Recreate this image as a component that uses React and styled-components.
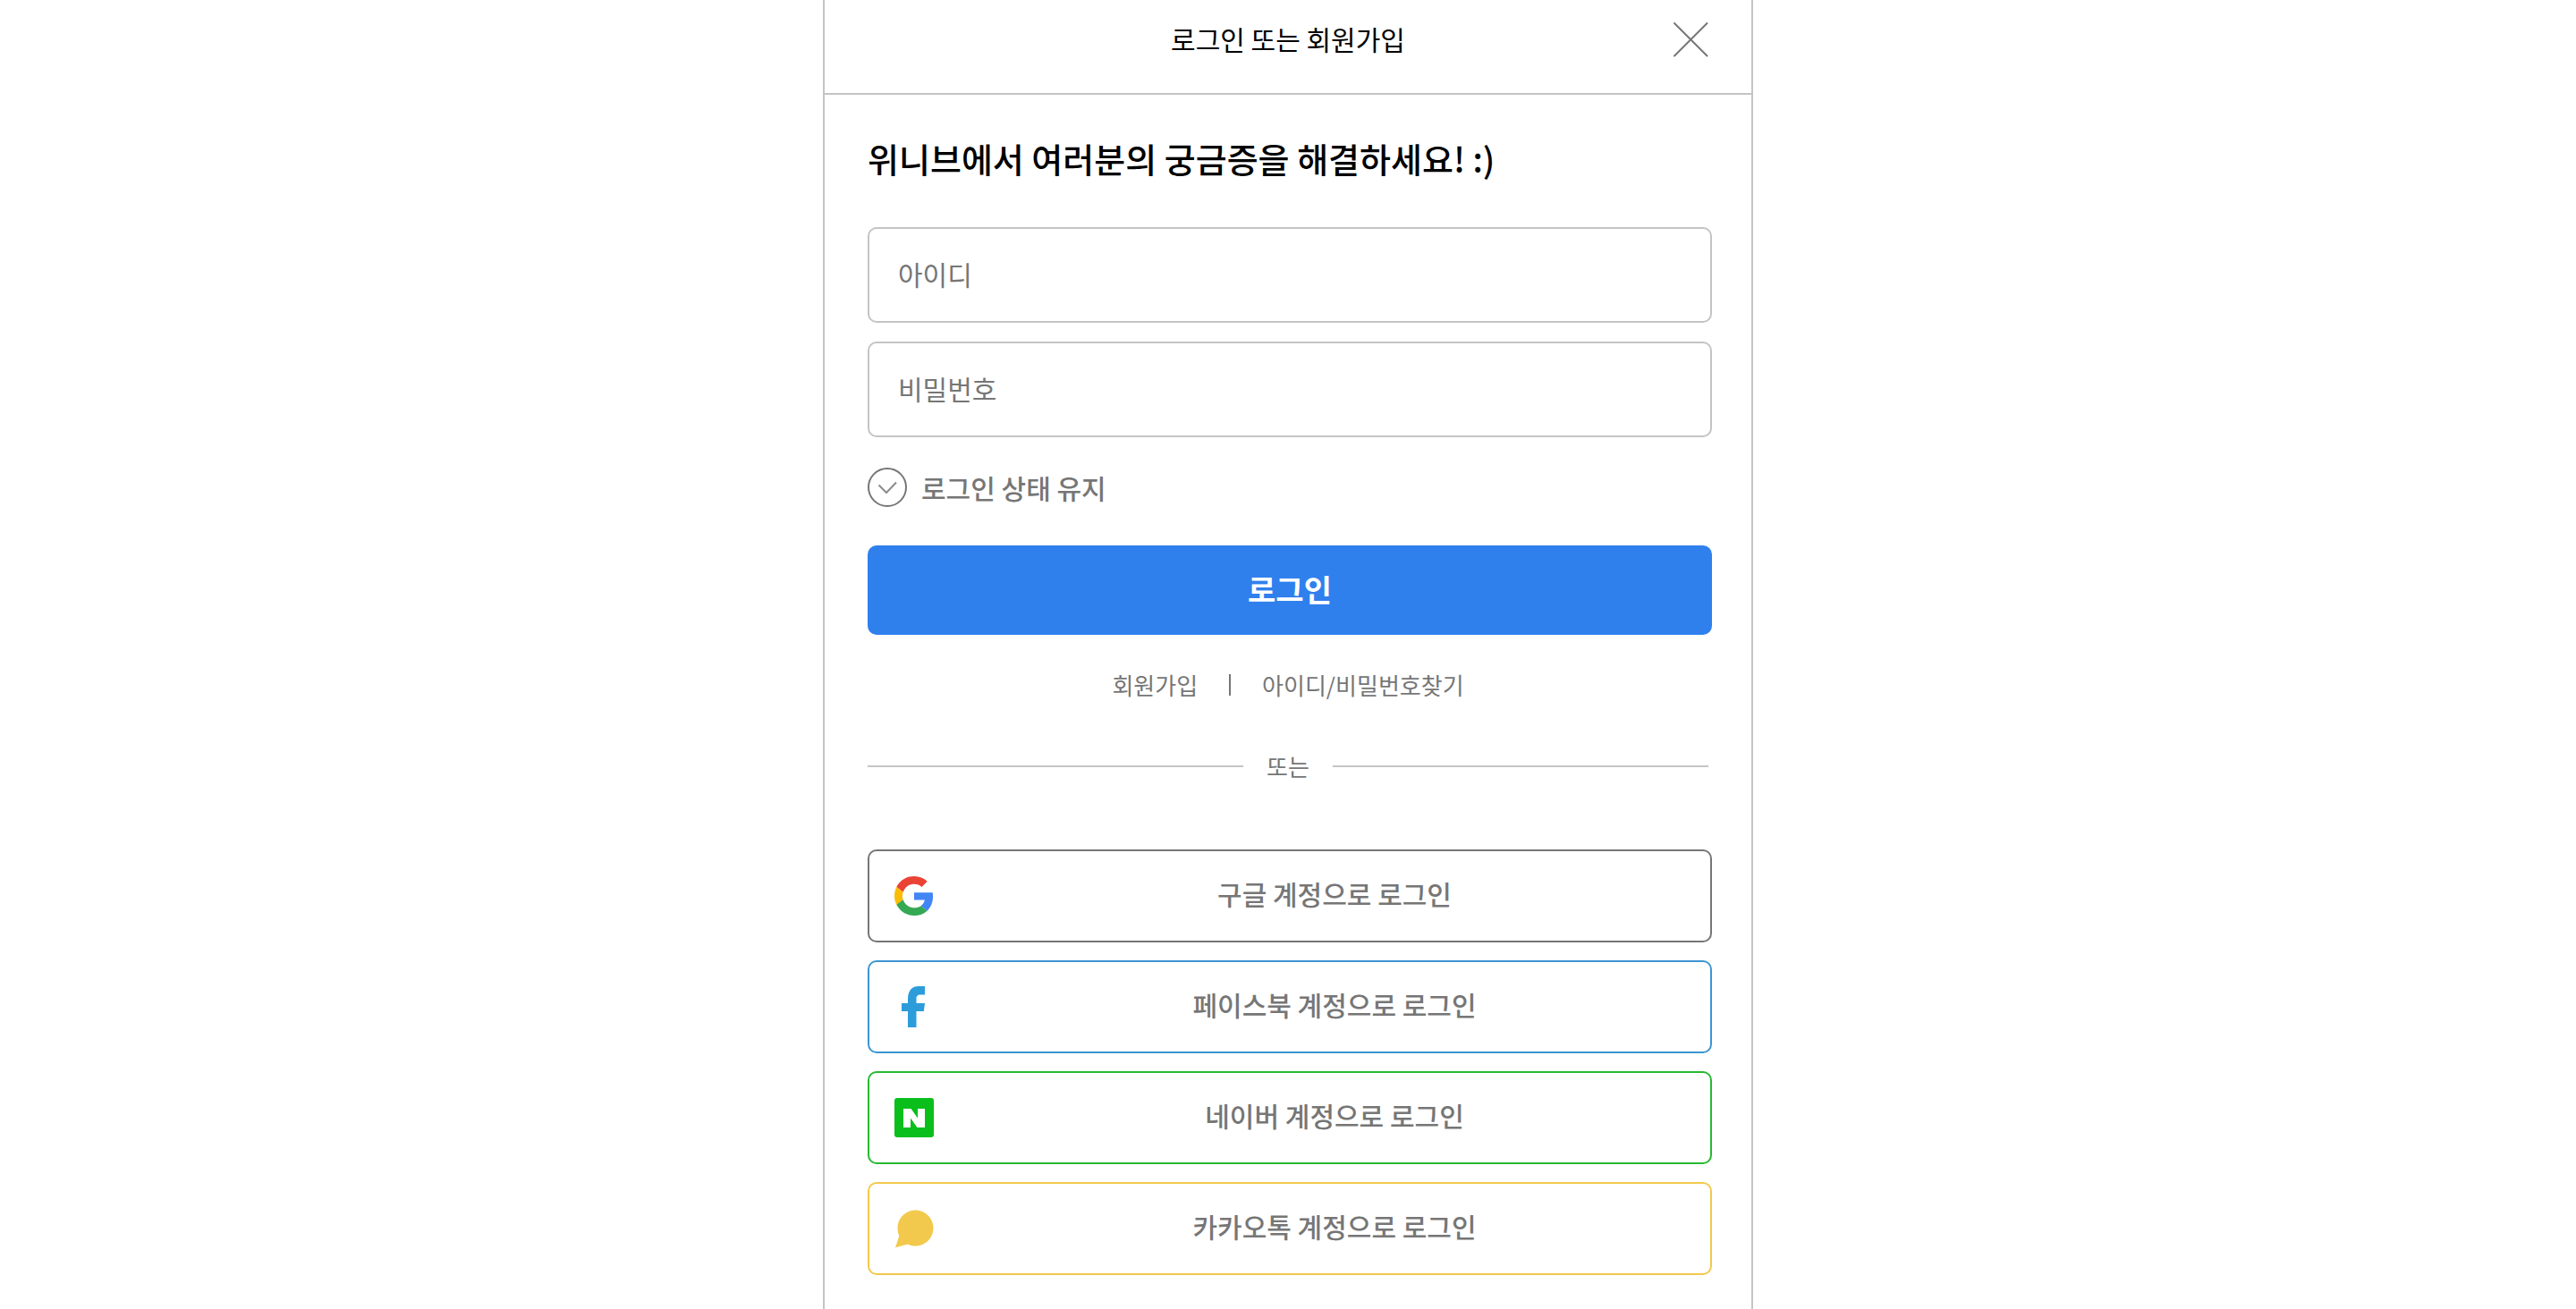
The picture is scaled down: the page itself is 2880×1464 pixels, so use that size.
import React from "react";
import styled, { createGlobalStyle } from "styled-components";

const color = {
  text: "#000000",
  gray: "#767676",
  line: "#c4c4c4",
  primary: "#2f80ed",
  facebook: "#2d9cdb",
  facebookLine: "#3c96d2",
  naver: "#0abf1c",
  naverLine: "#28b932",
  kakao: "#f2c94c",
};

const GlobalStyle = createGlobalStyle`
  *, *::before, *::after { box-sizing: border-box; }
  body {
    margin: 0;
    background: #ffffff;
    color: ${color.text};
    font-family: "Noto Sans CJK KR", "Noto Sans", sans-serif;
    font-size: 30px;
  }
  button, input { font: inherit; }
`;

const Page = styled.main`
  display: flex;
  align-items: center;
  justify-content: center;
  height: 100vh;
  overflow: hidden;
`;

const Card = styled.section`
  flex: none;
  width: 100%;
  max-width: 1040px;
  border: 2px solid ${color.line};
  border-radius: 20px;
  background: #ffffff;
`;

const Header = styled.header`
  display: grid;
  grid-template-columns: 1fr auto 1fr;
  align-items: center;
  height: 122px;
  padding: 0 48px;
  border-bottom: 2px solid ${color.line};
`;

const HeaderTitle = styled.h1`
  grid-column: 2;
  margin: 0;
  padding-bottom: 2px;
  font-size: 30px;
  font-weight: 400;
  line-height: 44px;
`;

const CloseButton = styled.button`
  justify-self: end;
  display: flex;
  padding: 0;
  border: 0;
  background: none;
  color: ${color.gray};
  cursor: pointer;
`;

const Body = styled.div`
  padding: 43px 44px 54px 48px;
`;

const Title = styled.h2`
  margin: 0 0 49px;
  font-size: 38px;
  font-weight: 500;
  line-height: 56px;
`;

const Fields = styled.div`
  display: flex;
  flex-direction: column;
  gap: 21px;
`;

const Field = styled.input`
  width: 100%;
  height: 107px;
  padding: 0 32px 4px;
  border: 2px solid ${color.line};
  border-radius: 10px;
  background: #ffffff;
  color: ${color.text};

  &::placeholder {
    color: ${color.gray};
    opacity: 1;
  }
`;

const KeepLogin = styled.label`
  display: flex;
  align-items: center;
  gap: 16px;
  margin: 34px 0 43px;
  color: ${color.gray};
  font-weight: 500;
  line-height: 44px;
  cursor: pointer;
`;

const CheckBox = styled.span`
  display: grid;

  & > * { grid-area: 1 / 1; }
  & > svg { pointer-events: none; }
`;

const CheckInput = styled.input`
  appearance: none;
  width: 44px;
  height: 44px;
  margin: 0;
  border: 2px solid ${color.gray};
  border-radius: 50%;
  cursor: pointer;
`;

const LoginButton = styled.button`
  display: block;
  width: 100%;
  height: 100px;
  padding: 0 0 4px;
  border: 0;
  border-radius: 10px;
  background: ${color.primary};
  color: #ffffff;
  font-size: 34px;
  font-weight: 700;
  cursor: pointer;
`;

const Links = styled.nav`
  display: flex;
  align-items: center;
  justify-content: center;
  gap: 35px;
  margin: 36px 4px 51px 0;
  font-size: 26px;
  line-height: 40px;
`;

const TextLink = styled.a`
  color: ${color.gray};
  text-decoration: none;
`;

const Bar = styled.span`
  width: 2px;
  height: 24px;
  background: ${color.gray};
`;

const Divider = styled.div`
  display: flex;
  align-items: center;
  gap: 26px;
  margin: 0 4px 73px 0;
  color: ${color.gray};
  font-size: 26px;
  line-height: 40px;

  &::before,
  &::after {
    content: "";
    flex: 1;
    height: 2px;
    background: ${color.line};
  }
`;

const SocialList = styled.div`
  display: flex;
  flex-direction: column;
  gap: 20px;
`;

const SocialButton = styled.button`
  display: flex;
  align-items: center;
  width: 100%;
  height: 104px;
  padding: 0 0 0 28px;
  border: 2px solid ${(props) => props.$color};
  border-radius: 10px;
  background: #ffffff;
  color: ${color.gray};
  font-weight: 500;
  cursor: pointer;

  & > svg { flex: none; margin-right: 28px; }
`;

const SocialLabel = styled.span`
  flex: 1;
  padding-bottom: 6px;
  text-align: center;
`;

const CloseIcon = () => (
  <svg width="40" height="40" viewBox="0 0 40 40" fill="none" stroke="currentColor" strokeWidth="2" strokeLinecap="round" aria-hidden="true">
    <path d="M2 2 38.500 38.500M38.500 2 2 38.500" />
  </svg>
);

const CheckIcon = () => (
  <svg width="44" height="44" viewBox="0 0 44 44" fill="none" stroke="#8c8c8c" strokeWidth="2" aria-hidden="true">
    <path d="M12.5 19.5 21 28 32 16.5" />
  </svg>
);

const GoogleIcon = () => (
  <svg width="44" height="44" viewBox="0 0 48 48" aria-hidden="true">
    <path fill="#EA4335" d="M24 9.5c3.54 0 6.71 1.22 9.21 3.6l6.85-6.85C35.9 2.38 30.47 0 24 0 14.62 0 6.51 5.38 2.56 13.22l7.98 6.19C12.43 13.72 17.74 9.5 24 9.5z" />
    <path fill="#4285F4" d="M46.98 24.55c0-1.57-.15-3.09-.38-4.55H24v9.02h12.94c-.58 2.96-2.26 5.48-4.78 7.18l7.73 6c4.51-4.18 7.09-10.36 7.09-17.65z" />
    <path fill="#FBBC05" d="M10.53 28.59c-.48-1.45-.76-2.99-.76-4.59s.27-3.14.76-4.59l-7.98-6.19C.92 16.46 0 20.12 0 24c0 3.88.92 7.54 2.56 10.78l7.97-6.19z" />
    <path fill="#34A853" d="M24 48c6.48 0 11.93-2.13 15.89-5.81l-7.73-6c-2.15 1.45-4.92 2.3-8.16 2.3-6.26 0-11.57-4.22-13.47-9.91l-7.98 6.19C6.51 42.62 14.62 48 24 48z" />
  </svg>
);

const FacebookIcon = () => (
  <svg width="44" height="46" viewBox="0 0 44 46" aria-hidden="true">
    <path fill={color.facebook} d="M15 46V28H8V19h7v-5C15 5 20 0 26.500 0H34v9.500h-5c-3.500 0-4.500 1.500-4.500 4.500v5H34l-1.200 9h-8.300V46z" />
  </svg>
);

const NaverIcon = () => (
  <svg width="44" height="44" viewBox="0 0 44 44" aria-hidden="true">
    <rect width="44" height="44" rx="3" fill={color.naver} />
    <path fill="#ffffff" d="M10 12h8.500l7.500 10.500V12h8v21h-8.500L18 22.500V33h-8z" />
  </svg>
);

const KakaoIcon = () => (
  <svg width="44" height="44" viewBox="0 0 44 44" aria-hidden="true">
    <path fill={color.kakao} d="M23.500 1.500C34.500 1.500 43.500 10.500 43.500 21.500S34.500 41.500 23.500 41.500c-3.300 0-6-.7-8.500-2L1 43.200 5.300 30.500C4.200 27.800 3.500 24.800 3.500 21.500 3.500 10.500 12.500 1.500 23.500 1.500z" />
  </svg>
);

const socials = [
  { label: "구글 계정으로 로그인", border: color.gray, Icon: GoogleIcon },
  { label: "페이스북 계정으로 로그인", border: color.facebookLine, Icon: FacebookIcon },
  { label: "네이버 계정으로 로그인", border: color.naverLine, Icon: NaverIcon },
  { label: "카카오톡 계정으로 로그인", border: color.kakao, Icon: KakaoIcon },
];

export default function App() {
  return (
    <Page>
      <GlobalStyle />
      <Card>
        <Header>
          <HeaderTitle>로그인 또는 회원가입</HeaderTitle>
          <CloseButton type="button" aria-label="닫기">
            <CloseIcon />
          </CloseButton>
        </Header>
        <Body>
          <Title>위니브에서 여러분의 궁금증을 해결하세요! :)</Title>
          <form onSubmit={(event) => event.preventDefault()}>
            <Fields>
              <Field type="text" placeholder="아이디" aria-label="아이디" autoComplete="username" />
              <Field type="password" placeholder="비밀번호" aria-label="비밀번호" autoComplete="current-password" />
            </Fields>
            <KeepLogin>
              <CheckBox>
                <CheckInput type="checkbox" />
                <CheckIcon />
              </CheckBox>
              로그인 상태 유지
            </KeepLogin>
            <LoginButton type="submit">로그인</LoginButton>
          </form>
          <Links>
            <TextLink href="#signup">회원가입</TextLink>
            <Bar />
            <TextLink href="#find">아이디/비밀번호찾기</TextLink>
          </Links>
          <Divider>또는</Divider>
          <SocialList>
            {socials.map(({ label, border, Icon }) => (
              <SocialButton key={label} type="button" $color={border}>
                <Icon />
                <SocialLabel>{label}</SocialLabel>
              </SocialButton>
            ))}
          </SocialList>
        </Body>
      </Card>
    </Page>
  );
}
